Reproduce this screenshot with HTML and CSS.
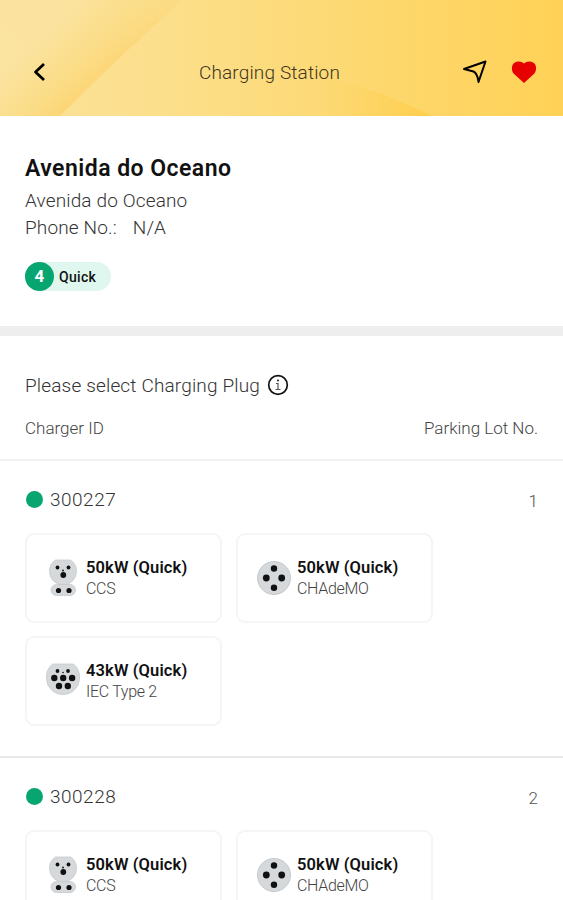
FILE: index.html
```html
<!DOCTYPE html>
<html lang="en">
<head>
<meta charset="utf-8">
<title>Charging Station</title>
<link rel="stylesheet" href="styles.css">
</head>
<body>
<svg class="defs" aria-hidden="true">
  <symbol id="ccs" viewBox="0 0 34 38">
    <path d="M9.500 1h15a13.300 13.300 0 0 1 6 11.500a13.500 13.500 0 0 1-27 0A13.300 13.300 0 0 1 9.500 1z" fill="#d5d9db" stroke="#c5cacc" stroke-width=".8"/>
    <rect x="5" y="25.500" width="24.500" height="11" rx="5.500" fill="#d5d9db" stroke="#c5cacc" stroke-width=".8"/>
    <g fill="#111"><circle cx="11.500" cy="8.500" r="1.900"/><circle cx="22.500" cy="8.500" r="1.900"/><circle cx="17" cy="11.500" r=".9"/><circle cx="17.300" cy="16" r="2.900"/><circle cx="12.500" cy="31.500" r="2.600"/><circle cx="23" cy="31.500" r="2.600"/></g>
  </symbol>
  <symbol id="chademo" viewBox="0 0 34 38">
    <circle cx="17" cy="19" r="16.500" fill="#d5d9db" stroke="#c5cacc"/>
    <g fill="#111"><circle cx="17" cy="9.500" r="3.200"/><circle cx="9.300" cy="19" r="3.400"/><circle cx="24.700" cy="19" r="3.400"/><circle cx="17" cy="28.800" r="3.200"/></g>
  </symbol>
  <symbol id="type2" viewBox="0 2 34 38">
    <path d="M6.500 4h21a17 17 0 0 1 6 14.500a16.500 16 0 0 1-33 0A17 17 0 0 1 6.500 4z" fill="#d5d9db" stroke="#c5cacc" stroke-width=".8"/>
    <g fill="#111"><circle cx="11.500" cy="11" r="1.900"/><circle cx="22" cy="11" r="1.900"/><circle cx="17" cy="12.500" r=".8"/><circle cx="8.300" cy="18" r="3.200"/><circle cx="17.200" cy="18" r="3.200"/><circle cx="26.100" cy="18" r="3.200"/><circle cx="13" cy="26" r="3.200"/><circle cx="21.800" cy="26" r="3.200"/></g>
  </symbol>
</svg>

<header class="topbar">
  <svg class="topbar-art" viewBox="0 0 563 116" preserveAspectRatio="none" aria-hidden="true">
    <defs>
      <linearGradient id="base" x1="0" x2="1" y1="0" y2="0"><stop offset="0" stop-color="#fbe29b"/><stop offset=".3" stop-color="#fcdf8b"/><stop offset=".65" stop-color="#fdd870"/><stop offset="1" stop-color="#ffd156"/></linearGradient>
      <linearGradient id="fold" gradientUnits="userSpaceOnUse" x1="72" y1="8" x2="122" y2="60"><stop offset="0" stop-color="#fbe3a0"/><stop offset=".6" stop-color="#fbdd88"/><stop offset="1" stop-color="#fcd574"/></linearGradient>
      <linearGradient id="foldfade" gradientUnits="userSpaceOnUse" x1="60" y1="116" x2="182" y2="0"><stop offset="0" stop-color="#fcdf8e" stop-opacity="0"/><stop offset=".5" stop-color="#fcdf8e" stop-opacity=".1"/><stop offset="1" stop-color="#fcdf8e" stop-opacity=".6"/></linearGradient>
      <linearGradient id="wavefade" x1="0" x2="1" y1="0" y2="0"><stop offset="0" stop-color="#fdd567" stop-opacity="0"/><stop offset="1" stop-color="#ffcb43" stop-opacity=".8"/></linearGradient>
    </defs>
    <rect width="563" height="116" fill="url(#base)"/>
    <path d="M0 0H182Q122 54 60 116H0z" fill="url(#fold)"/>
    <path d="M0 0H182Q122 54 60 116H0z" fill="url(#foldfade)"/>
    <path d="M310 76Q365 82 432 116H310z" fill="url(#wavefade)"/>
  </svg>
  <svg class="back" viewBox="0 0 14 20" aria-hidden="true"><path d="M12 2 3.500 10 12 18" fill="none" stroke="#000" stroke-width="2.800" stroke-linejoin="round"/></svg>
  <h1 class="topbar-title">Charging Station</h1>
  <div class="actions">
    <svg class="send" viewBox="0 0 26 26" aria-hidden="true"><path d="M2 10 23.500 2.500 16.500 23 Q15.500 14.500 11.500 12.500z" fill="none" stroke="#000" stroke-width="2" stroke-linejoin="round"/></svg>
    <svg class="heart" viewBox="0 0 26 24" aria-hidden="true"><path d="M13 23 2.600 13.600C.2 10.500.5 5.500 2.800 3.300C5.600.8 10.300.7 13 3.500C15.700.7 20.400.8 23.200 3.300C25.500 5.500 25.800 10.500 23.400 13.600z" fill="#e60000"/></svg>
  </div>
</header>

<section class="station">
  <h2 class="name">Avenida do Oceano</h2>
  <p class="address">Avenida do Oceano</p>
  <p class="phone"><span>Phone No.:</span><span>N/A</span></p>
  <div class="badge"><span class="count">4</span><span class="kind">Quick</span></div>
</section>

<section class="select">
  <div class="prompt"><span>Please select Charging Plug</span>
    <svg class="info" viewBox="0 0 22 22" aria-hidden="true"><circle cx="11" cy="11" r="9.300" fill="none" stroke="#111" stroke-width="1.700"/><path d="M9 9.500h2v6M8.500 15.500h5" fill="none" stroke="#555" stroke-width="1.200"/><circle cx="11" cy="6.500" r="1.100" fill="#333"/></svg>
  </div>
  <div class="columns"><span>Charger ID</span><span>Parking Lot No.</span></div>
</section>

<section class="charger">
  <div class="charger-head"><i class="dot"></i><span class="id">300227</span><span class="lot">1</span></div>
  <div class="plugs">
    <div class="plug"><svg class="icon"><use href="#ccs"/></svg><div><b class="power">50kW (Quick)</b><span class="type">CCS</span></div></div>
    <div class="plug"><svg class="icon"><use href="#chademo"/></svg><div><b class="power">50kW (Quick)</b><span class="type">CHAdeMO</span></div></div>
    <div class="plug"><svg class="icon"><use href="#type2"/></svg><div><b class="power">43kW (Quick)</b><span class="type">IEC Type 2</span></div></div>
  </div>
</section>

<section class="charger clipped">
  <div class="charger-head"><i class="dot"></i><span class="id">300228</span><span class="lot">2</span></div>
  <div class="plugs">
    <div class="plug"><svg class="icon"><use href="#ccs"/></svg><div><b class="power">50kW (Quick)</b><span class="type">CCS</span></div></div>
    <div class="plug"><svg class="icon"><use href="#chademo"/></svg><div><b class="power">50kW (Quick)</b><span class="type">CHAdeMO</span></div></div>
  </div>
</section>
</body>
</html>
```
FILE: styles.css
```css
* { box-sizing: border-box; margin: 0; padding: 0; }
html, body { height: 900px; overflow: hidden; }
body { background: #fff; color: #333; font-family: Roboto, "Open Sans", sans-serif; font-weight: 300; white-space: nowrap; }
svg { display: block; }
.defs { position: absolute; width: 0; height: 0; }

.topbar { position: relative; height: 116px; padding: 28px 26px 0 32px; display: grid; grid-template-columns: 80px 1fr 80px; align-items: center; }
.topbar > * { position: relative; }
.topbar > .topbar-art { position: absolute; inset: 0; width: 100%; height: 100%; }
.back { width: 14px; height: 20px; }
.topbar-title { padding: 2px 30px 0 0; text-align: center; font-size: 19px; line-height: 28px; font-weight: 300; color: #40351c; letter-spacing: .15px; }
.actions { display: flex; align-items: center; justify-content: flex-end; gap: 23px; }
.send { width: 26px; height: 26px; flex: none; }
.heart { width: 26px; height: 24px; flex: none; }

.station { height: 220px; padding: 38px 25px 0; border-bottom: 10px solid #eee; }
.name { font-size: 23px; line-height: 30px; font-weight: 600; color: #111; letter-spacing: .47px; }
.address, .phone { font-size: 19px; line-height: 27px; letter-spacing: .14px; }
.address { margin-top: 3px; }
.phone { display: flex; gap: 16px; }
.badge { display: flex; align-items: center; width: 86px; height: 29px; margin-top: 21px; border-radius: 15px; background: #e0f7ef; }
.count { width: 29px; height: 29px; border-radius: 50%; background: #07a56f; color: #fff; font-size: 17px; line-height: 29px; font-weight: 700; text-align: center; }
.kind { margin-left: 5px; font-size: 14px; font-weight: 500; color: #111; letter-spacing: .3px; }

.select { height: 125px; padding: 35px 25px 0; border-bottom: 2px solid #f2f2f2; }
.prompt { display: flex; align-items: center; gap: 7px; height: 28px; font-size: 19px; letter-spacing: .16px; }
.info { width: 22px; height: 22px; }
.columns { display: flex; justify-content: space-between; margin-top: 17px; font-size: 17px; line-height: 24px; color: #444; }

.charger { height: 297px; padding: 24px 25px 0; border-bottom: 2px solid #e9e9e9; }
.clipped { height: 142px; border-bottom: 0; overflow: hidden; }
.charger-head { display: flex; align-items: center; height: 28px; font-size: 19px; }
.dot { width: 17px; height: 17px; margin: 0 7px 0 1px; border-radius: 50%; background: #07a56f; }
.id { letter-spacing: .5px; }
.lot { margin-left: auto; padding-top: 3px; font-size: 17px; color: #555; }
.plugs { display: grid; grid-template-columns: 197px 197px; grid-auto-rows: 90px; gap: 13px 14px; margin-top: 20px; }
.plug { display: flex; align-items: center; padding: 0 0 1px 19px; border: 2px solid #f5f5f5; border-radius: 9px; }
.icon { width: 34px; height: 38px; margin-right: 6px; }
.power { display: block; padding-top: 1px; font-size: 16.5px; line-height: 21px; font-weight: 600; color: #111; letter-spacing: .12px; }
.type { display: block; font-size: 16px; line-height: 21px; color: #444; letter-spacing: -.3px; }
```
